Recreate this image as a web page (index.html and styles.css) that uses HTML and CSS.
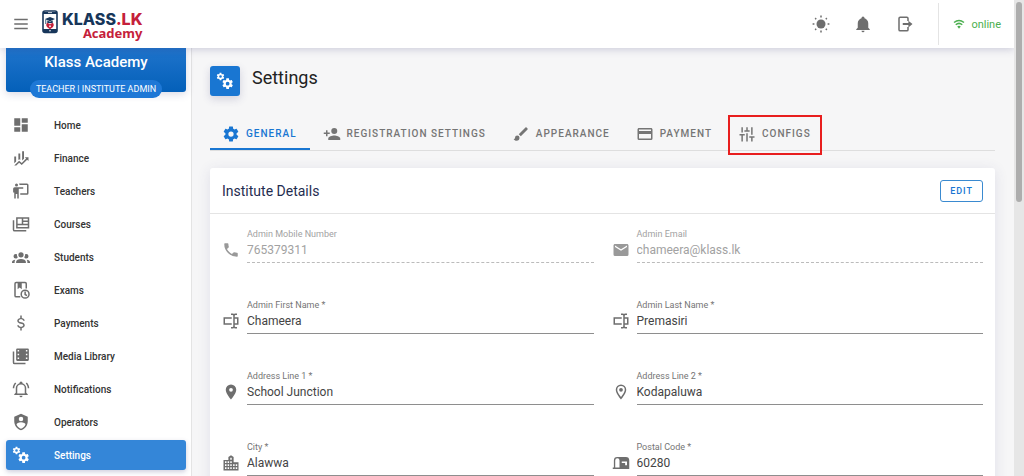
FILE: index.html
```html
<!DOCTYPE html>
<html lang="en">
<head>
<meta charset="utf-8">
<title>Settings - Klass Academy</title>
<link rel="stylesheet" href="styles.css">
</head>
<body>
<svg class="sprite" aria-hidden="true">
  <symbol id="cog" viewBox="0 0 24 24"><path d="M12,15.5A3.5,3.5 0 0,1 8.5,12A3.5,3.5 0 0,1 12,8.5A3.5,3.5 0 0,1 15.5,12A3.5,3.5 0 0,1 12,15.5M19.43,12.97C19.47,12.65 19.5,12.33 19.5,12C19.5,11.67 19.47,11.34 19.43,11L21.54,9.37C21.73,9.22 21.78,8.95 21.66,8.73L19.66,5.27C19.54,5.05 19.27,4.96 19.05,5.05L16.56,6.05C16.04,5.66 15.5,5.32 14.87,5.07L14.5,2.42C14.46,2.18 14.25,2 14,2H10C9.75,2 9.54,2.18 9.5,2.42L9.13,5.07C8.5,5.32 7.96,5.66 7.44,6.05L4.95,5.05C4.73,4.96 4.46,5.05 4.34,5.27L2.34,8.73C2.21,8.95 2.27,9.22 2.46,9.37L4.57,11C4.53,11.34 4.5,11.67 4.5,12C4.5,12.33 4.53,12.65 4.57,12.97L2.46,14.63C2.27,14.78 2.21,15.05 2.34,15.27L4.34,18.73C4.46,18.95 4.73,19.03 4.95,18.95L7.44,17.94C7.96,18.34 8.5,18.68 9.13,18.93L9.5,21.58C9.54,21.82 9.75,22 10,22H14C14.25,22 14.46,21.82 14.5,21.58L14.87,18.93C15.5,18.67 16.04,18.34 16.56,17.94L19.05,18.95C19.27,19.03 19.54,18.95 19.66,18.73L21.66,15.27C21.78,15.05 21.73,14.78 21.54,14.63L19.43,12.97Z"/></symbol>
  <symbol id="cogs" viewBox="0 0 24 24"><use href="#cog" x="0" y="0" width="12" height="12"/><use href="#cog" x="7" y="7" width="17" height="17"/></symbol>
  <symbol id="textbox" viewBox="0 0 24 24"><path d="M17,7H22V17H17V19A1,1 0 0,0 18,20H20V22H17.5C16.95,22 16,21.55 16,21C16,21.55 15.05,22 14.5,22H12V20H14A1,1 0 0,0 15,19V5A1,1 0 0,0 14,4H12V2H14.5C15.05,2 16,2.45 16,3C16,2.45 16.95,2 17.5,2H20V4H18A1,1 0 0,0 17,5V7M2,7H13V9H4V15H13V17H2V7M20,15V9H17V15H20Z"/></symbol>
</svg>
<div class="app">
  <header class="topbar">
    <button class="icon-button" type="button" aria-label="Menu"><svg class="icon" viewBox="0 0 24 24"><path d="M3,5H21V7H3ZM3,11H21V13H3ZM3,17H21V19H3Z"/></svg></button>
    <a class="logo" href="#">
      <svg class="logo-mark" viewBox="0 0 16 24"><rect x="1" y="1" width="14" height="21.5" rx="2" fill="#fff" stroke="#17365a" stroke-width="1.6"/><path d="M1 2h14v2H1zM1 19h14v3H1z" fill="#17365a"/><path d="M6 2.6h4" stroke="#fff" stroke-width=".8"/><path d="M8 7L13 9L8 11.2L3 9ZM5.3 10.5L8 11.7L10.7 10.5V13H5.3ZM3.4 9.5h.8V14h-.8z" fill="#17365a"/><path d="M5 12.8L8 14l3-1.200Q12.600 15 11 17L8 19.200L5 17Q3.400 15 5 12.800Z" fill="#c5203a"/><path d="M8 14.300l.7 2L8 17.600l-.7-1.300Z" fill="#fff"/><circle cx="8" cy="20.700" r=".8" fill="#fff"/></svg>
      <span class="logo-text"><span class="logo-name">KLASS<span class="logo-red">.LK</span></span><span class="logo-sub">Academy</span></span>
    </a>
    <div class="actions">
      <button class="icon-button" type="button" aria-label="Theme"><svg class="icon" viewBox="0 0 24 24"><circle cx="12" cy="12" r="6"/><g class="line"><path d="M12 .8V3.200M12 20.800v2.400M.8 12h2.400M20.800 12h2.400M4.200 4.200l1.400 1.400M18.400 18.400l1.400 1.400M19.800 4.200l-1.400 1.400M5.600 18.400l-1.400 1.400"/></g></svg></button>
      <button class="icon-button" type="button" aria-label="Notifications"><svg class="icon" viewBox="0 0 24 24"><path d="M21,19V20H3V19L5,17V11C5,7.9 7.03,5.17 10,4.29C10,4.19 10,4.1 10,4A2,2 0 0,1 12,2A2,2 0 0,1 14,4C14,4.1 14,4.19 14,4.29C16.97,5.17 19,7.9 19,11V17L21,19M14,21A2,2 0 0,1 12,23A2,2 0 0,1 10,21"/></svg></button>
      <button class="icon-button" type="button" aria-label="Log out"><svg class="icon" viewBox="0 0 24 24"><path class="line" d="M16 8V4.500Q16 3 14.500 3H5.500Q4 3 4 4.500V19.500Q4 21 5.500 21H14.500Q16 21 16 19.500V16"/><path d="M9 10.700H16.500V7.500L22 12L16.500 16.500V13.300H9Z"/></svg></button>
    </div>
    <div class="status"><svg class="wifi" viewBox="0 0 24 24"><path class="line" d="M2 9Q12 1 22 9M5.500 13.500Q12 8 18.500 13.500"/><path d="M8.500 17Q12 14 15.500 17L12 21.500Z"/></svg>online</div>
  </header>
  <div class="body">
    <aside class="sidebar">
      <div class="profile"><strong class="profile-name">Klass Academy</strong><span class="role">TEACHER | INSTITUTE ADMIN</span></div>
      <nav class="nav">
        <a class="nav-item" href="#"><svg class="icon" viewBox="0 0 24 24"><path d="M13,3V9H21V3M13,21H21V11H13M3,21H11V15H3M3,13H11V3H3V13Z"/></svg>Home</a>
        <a class="nav-item" href="#"><svg class="icon" viewBox="0 0 24 24"><path d="M5.500,16.500L3,18.940V10H5.500M11,14.660L9.700,13.500L8.500,14.640V6H11M16,13L13.500,15.300V3H16M18.810,12.810L17,11H22V16L20.210,14.210L13,21.360L9.530,18.340L5.750,22H3L9.470,15.660L13,18.640"/></svg>Finance</a>
        <a class="nav-item" href="#"><svg class="icon" viewBox="0 0 24 24"><path d="M20,17A2,2 0 0,0 22,15V4A2,2 0 0,0 20,2H9.46C9.81,2.61 10,3.3 10,4H20V15H11V17M15,7V9H9V22H7V16H5V22H3V14H1.5V9A2,2 0 0,1 3.5,7H15M8,4A2,2 0 0,1 6,6A2,2 0 0,1 4,4A2,2 0 0,1 6,2A2,2 0 0,1 8,4Z"/></svg>Teachers</a>
        <a class="nav-item" href="#"><svg class="icon" viewBox="0 0 24 24"><path class="line" d="M2 7V19.500Q2 21 3.500 21H19M6.500 4H22V17H6.500ZM6.500 12.500H22M14 4V12.500M14 8.200H22"/></svg>Courses</a>
        <a class="nav-item" href="#"><svg class="icon" viewBox="0 0 24 24"><path d="M12,5.5A3.5,3.5 0 0,1 15.5,9A3.5,3.5 0 0,1 12,12.5A3.5,3.5 0 0,1 8.5,9A3.5,3.5 0 0,1 12,5.5M5,8C5.56,8 6.08,8.15 6.53,8.42C6.38,9.85 6.8,11.27 7.66,12.38C7.16,13.34 6.16,14 5,14A3,3 0 0,1 2,11A3,3 0 0,1 5,8M19,8A3,3 0 0,1 22,11A3,3 0 0,1 19,14C17.84,14 16.84,13.34 16.34,12.38C17.2,11.27 17.62,9.85 17.47,8.42C17.92,8.15 18.44,8 19,8M5.5,18.25C5.5,16.18 8.41,14.5 12,14.5C15.59,14.5 18.5,16.18 18.5,18.25V20H5.5V18.25M0,20V18.5C0,17.11 1.89,15.94 4.45,15.6C3.86,16.28 3.5,17.22 3.5,18.25V20H0M24,20H20.5V18.25C20.5,17.22 20.14,16.28 19.55,15.6C22.11,15.94 24,17.11 24,18.5V20Z"/></svg>Students</a>
        <a class="nav-item" href="#"><svg class="icon" viewBox="0 0 24 24"><path class="line" d="M11 21H5.500Q4 21 4 19.500V3.500Q4 2 5.500 2H17.500Q19 2 19 3.500V10"/><path d="M7.500 2H13V11L10.200 8.500L7.500 11Z"/><circle class="line" cx="17.500" cy="17.500" r="5.200"/><path class="line" d="M17.500 14V18L20 19.500"/></svg>Exams</a>
        <a class="nav-item" href="#"><svg class="icon" viewBox="0 0 24 24"><path d="M7,15H9C9,16.08 10.37,17 12,17C13.63,17 15,16.08 15,15C15,13.9 13.96,13.5 11.76,12.97C9.64,12.44 7,11.78 7,9C7,7.21 8.47,5.69 11,5.18V2H13V5.18C15.53,5.69 17,7.21 17,9H15C15,7.92 13.63,7 12,7C10.37,7 9,7.92 9,9C9,10.1 10.04,10.5 12.24,11.03C14.36,11.56 17,12.22 17,15C17,16.79 15.53,18.31 13,18.82V22H11V18.82C8.47,18.31 7,16.79 7,15Z"/></svg>Payments</a>
        <a class="nav-item" href="#"><svg class="icon" viewBox="0 0 24 24"><path class="line" d="M2 6V20.500Q2 22 3.500 22H18"/><path fill-rule="evenodd" d="M7 2H21Q22.500 2 22.500 3.500V17Q22.500 18.500 21 18.500H7Q5.500 18.500 5.500 17V3.500Q5.500 2 7 2ZM7.500 4V6H9.500V4ZM7.500 9V11H9.500V9ZM7.500 14V16H9.500V14ZM18.500 4V6H20.500V4ZM18.500 9V11H20.500V9ZM18.500 14V16H20.500V14Z"/></svg>Media Library</a>
        <a class="nav-item" href="#"><svg class="icon" viewBox="0 0 24 24"><path d="M10,21H14A2,2 0 0,1 12,23A2,2 0 0,1 10,21M21,19V20H3V19L5,17V11C5,7.9 7.03,5.17 10,4.29C10,4.19 10,4.1 10,4A2,2 0 0,1 12,2A2,2 0 0,1 14,4C14,4.1 14,4.19 14,4.29C16.97,5.17 19,7.9 19,11V17L21,19M17,11A5,5 0 0,0 12,6A5,5 0 0,0 7,11V18H17V11M19.75,3.19L18.33,4.61C20.04,6.3 21,8.6 21,11H23C23,8.07 21.84,5.25 19.75,3.19M1,11H3C3,8.6 3.96,6.3 5.67,4.61L4.25,3.19C2.16,5.25 1,8.07 1,11Z"/></svg>Notifications</a>
        <a class="nav-item" href="#"><svg class="icon" viewBox="0 0 24 24"><path d="M12,1L3,5V11C3,16.55 6.84,21.74 12,23C17.16,21.74 21,16.55 21,11V5L12,1M12,5A3,3 0 0,1 15,8A3,3 0 0,1 12,11A3,3 0 0,1 9,8A3,3 0 0,1 12,5M17.13,17C15.92,18.85 14.11,20.24 12,20.92C9.89,20.24 8.08,18.85 6.87,17C6.53,16.5 6.24,16 6,15.47C6,13.82 8.71,12.47 12,12.47C15.29,12.47 18,13.79 18,15.47C17.76,16 17.47,16.5 17.13,17Z"/></svg>Operators</a>
        <a class="nav-item active" href="#" aria-current="page"><svg class="icon"><use href="#cogs"/></svg>Settings</a>
      </nav>
    </aside>
    <main class="main">
      <div class="page-head"><span class="page-icon"><svg class="icon"><use href="#cogs"/></svg></span><h1 class="page-title">Settings</h1></div>
      <div class="tabs" role="tablist">
        <button class="tab selected" type="button" role="tab" aria-selected="true"><svg class="icon"><use href="#cog"/></svg>GENERAL</button>
        <button class="tab" type="button" role="tab"><svg class="icon" viewBox="0 0 24 24"><path d="M15,14C12.33,14 7,15.33 7,18V20H23V18C23,15.33 17.67,14 15,14M6,10V7H4V10H1V12H4V15H6V12H9V10M15,12A4,4 0 0,0 19,8A4,4 0 0,0 15,4A4,4 0 0,0 11,8A4,4 0 0,0 15,12Z"/></svg>REGISTRATION SETTINGS</button>
        <button class="tab" type="button" role="tab"><svg class="icon" viewBox="0 0 24 24"><path d="M20.71,4.63L19.37,3.29C19,2.9 18.35,2.9 17.96,3.29L9,12.25L11.75,15L20.71,6.04C21.1,5.65 21.1,5 20.71,4.63M7,14A3,3 0 0,0 4,17C4,18.31 2.84,19 2,19C2.92,20.22 4.5,21 6,21A4,4 0 0,0 10,17A3,3 0 0,0 7,14Z"/></svg>APPEARANCE</button>
        <button class="tab" type="button" role="tab"><svg class="icon" viewBox="0 0 24 24"><path d="M20,8H4V6H20M20,18H4V12H20M20,4H4C2.89,4 2,4.89 2,6V18A2,2 0 0,0 4,20H20A2,2 0 0,0 22,18V6C22,4.89 21.1,4 20,4Z"/></svg>PAYMENT</button>
        <button class="tab highlighted" type="button" role="tab"><svg class="icon" viewBox="0 0 24 24"><path d="M4.500 3H6.500V10H4.500ZM2 12H9V14H6.500V22H4.500V14H2ZM11 3H13V7H15.500V9H8.500V7H11ZM11 11H13V22H11ZM17.500 3H19.500V13H17.500ZM15 15H22V17H19.500V22H17.500V17H15Z"/></svg>CONFIGS</button>
      </div>
      <section class="card">
        <div class="card-head"><h2 class="card-title">Institute Details</h2><button class="edit" type="button">EDIT</button></div>
        <form class="form">
          <div class="field disabled"><svg class="icon" viewBox="0 0 24 24"><path d="M6.62,10.79C8.06,13.62 10.38,15.94 13.21,17.38L15.41,15.18C15.69,14.9 16.08,14.82 16.43,14.93C17.55,15.3 18.75,15.5 20,15.5A1,1 0 0,1 21,16.5V20A1,1 0 0,1 20,21A17,17 0 0,1 3,4A1,1 0 0,1 4,3H7.5A1,1 0 0,1 8.5,4C8.5,5.25 8.7,6.45 9.07,7.57C9.18,7.92 9.1,8.31 8.82,8.59L6.62,10.79Z"/></svg><div class="control"><label for="mobile">Admin Mobile Number</label><input id="mobile" type="text" value="765379311" disabled></div></div>
          <div class="field disabled"><svg class="icon" viewBox="0 0 24 24"><path d="M20,8L12,13L4,8V6L12,11L20,6M20,4H4C2.89,4 2,4.89 2,6V18A2,2 0 0,0 4,20H20A2,2 0 0,0 22,18V6C22,4.89 21.1,4 20,4Z"/></svg><div class="control"><label for="email">Admin Email</label><input id="email" type="text" value="chameera@klass.lk" disabled></div></div>
          <div class="field"><svg class="icon"><use href="#textbox"/></svg><div class="control"><label for="first">Admin First Name *</label><input id="first" type="text" value="Chameera"></div></div>
          <div class="field"><svg class="icon"><use href="#textbox"/></svg><div class="control"><label for="last">Admin Last Name *</label><input id="last" type="text" value="Premasiri"></div></div>
          <div class="field"><svg class="icon" viewBox="0 0 24 24"><path d="M12,11.5A2.5,2.5 0 0,1 9.5,9A2.5,2.5 0 0,1 12,6.5A2.5,2.5 0 0,1 14.5,9A2.5,2.5 0 0,1 12,11.5M12,2A7,7 0 0,0 5,9C5,14.25 12,22 12,22C12,22 19,14.25 19,9A7,7 0 0,0 12,2Z"/></svg><div class="control"><label for="line1">Address Line 1 *</label><input id="line1" type="text" value="School Junction"></div></div>
          <div class="field"><svg class="icon" viewBox="0 0 24 24"><path d="M12,6.5A2.5,2.5 0 0,1 14.5,9A2.5,2.5 0 0,1 12,11.5A2.5,2.5 0 0,1 9.5,9A2.5,2.5 0 0,1 12,6.5M12,2A7,7 0 0,1 19,9C19,14.25 12,22 12,22C12,22 5,14.25 5,9A7,7 0 0,1 12,2M12,4A5,5 0 0,0 7,9C7,10 7,12 12,18.71C17,12 17,10 17,9A5,5 0 0,0 12,4Z"/></svg><div class="control"><label for="line2">Address Line 2 *</label><input id="line2" type="text" value="Kodapaluwa"></div></div>
          <div class="field"><svg class="icon" viewBox="0 0 24 24"><path fill-rule="evenodd" d="M2 8H8.500V4L12 1.500L15.500 4V11H22V22H2ZM4 9.500V12H6V9.500ZM4 13.500V16H6V13.500ZM4 17.500V20H6V17.500ZM7.500 9.500V12H9.500V9.500ZM7.500 13.500V16H9.500V13.500ZM7.500 17.500V20H9.500V17.500ZM11 5V7.500H13V5ZM11 9.500V12H13V9.500ZM11 13.500V16H13V13.500ZM11 17.500V20H13V17.500ZM14.800 13.500V16H16.800V13.500ZM14.800 17.500V20H16.800V17.500ZM18.300 13.500V16H20.300V13.500ZM18.300 17.500V20H20.300V17.500Z"/></svg><div class="control"><label for="city">City *</label><input id="city" type="text" value="Alawwa"></div></div>
          <div class="field"><svg class="icon" viewBox="0 0 24 24"><path fill-rule="evenodd" d="M7 4H18.500Q23 4 23 8.500V20H1V18H2.500V8.500Q2.500 4 7 4ZM4.300 18H10V8.500Q10 5.800 7.200 5.800Q4.300 5.800 4.300 8.500ZM13 10V12H17.500V15H20V10Z"/></svg><div class="control"><label for="postal">Postal Code *</label><input id="postal" type="text" value="60280"></div></div>
        </form>
      </section>
    </main>
  </div>
</div>
<div class="scroll-track"><div class="scroll-thumb"></div></div>
</body>
</html>
```
FILE: styles.css
```css
* { box-sizing: border-box; }
body {
  margin: 0;
  height: 100vh;
  display: flex;
  overflow: hidden;
  background: #f6f6f7;
  color: #333;
  font-family: Roboto, sans-serif;
}
button, input { font-family: inherit; }
button { border: 0; background: none; padding: 0; }
a { color: inherit; text-decoration: none; }
.sprite { position: absolute; width: 0; height: 0; }
.icon { width: 18px; height: 18px; flex: none; fill: currentColor; }
.line { fill: none; stroke: currentColor; stroke-width: 2; }

.app { flex: 1; min-width: 0; display: flex; flex-direction: column; }
.topbar {
  height: 48px;
  flex: none;
  display: flex;
  align-items: center;
  padding-left: 12px;
  background: #fff;
  box-shadow: 0 1px 8px rgba(60, 60, 120, .25);
  z-index: 1;
}
.icon-button { display: flex; color: #6e6e6e; }
.logo { display: flex; align-items: center; gap: 4px; margin-left: 12px; }
.logo-mark { width: 16px; height: 24px; margin-bottom: 4px; }
.logo-text { display: flex; flex-direction: column; align-items: flex-end; padding-top: 1px; }
.logo-name { font: 800 16px/16px Inter, sans-serif; color: #17365a; }
.logo-red { color: #c5203a; }
.logo-sub { font: 700 13px/12px "Noto Sans", sans-serif; color: #c5203a; }
.actions { display: flex; gap: 24px; margin-left: auto; padding-right: 24px; }
.status {
  display: flex;
  align-items: center;
  gap: 6px;
  height: 42px;
  padding: 0 13px 0 14px;
  border-left: 1px solid #e4e4e4;
  color: #4caf50;
  font-size: 11px;
}
.wifi { width: 12px; height: 12px; fill: currentColor; }
.wifi .line { stroke-width: 3; }

.body { flex: 1; min-height: 0; display: flex; }
.sidebar {
  width: 192px;
  flex: none;
  padding: 0 5px 0 6px;
  background: #fff;
  border-right: 1px solid #e4e4e4;
}
.profile {
  height: 44px;
  display: flex;
  flex-direction: column;
  align-items: center;
  gap: 8px;
  padding-top: 4px;
  border-radius: 0 0 3px 3px;
  background: linear-gradient(#1f74cc, #0460b9);
  box-shadow: 0 2px 8px rgba(60, 60, 120, .2);
  color: #fff;
}
.profile-name { font-size: 15px; line-height: 20px; font-weight: 500; }
.role {
  flex: none;
  padding: 0 6px;
  border-radius: 9px;
  background: #1e78d6;
  font-size: 9px;
  line-height: 18px;
}
.nav { display: flex; flex-direction: column; gap: 3px; padding-top: 18px; }
.nav-item {
  height: 30px;
  display: flex;
  align-items: center;
  gap: 24px;
  padding-left: 6px;
  border-radius: 3px;
  font-size: 10px;
  font-weight: 500;
}
.nav-item .icon { color: #6e6e6e; }
.nav-item.active {
  background: #3486d8;
  box-shadow: 0 2px 5px rgba(60, 60, 120, .25);
  color: #fff;
}
.nav-item.active .icon { color: #fff; }

.main { flex: 1; min-width: 0; padding: 18px 19px 0 18px; }
.page-head { display: flex; gap: 12px; }
.page-icon {
  width: 30px;
  height: 30px;
  display: flex;
  align-items: center;
  justify-content: center;
  border-radius: 3px;
  background: #1976d2;
  box-shadow: 0 3px 8px rgba(60, 60, 120, .2);
  color: #fff;
}
.page-title { margin: 0; font-size: 18px; line-height: 24px; font-weight: 400; color: #222; }
.tabs { display: flex; margin-top: 21px; border-bottom: 1px solid #dedede; }
.tab {
  position: relative;
  height: 33px;
  display: flex;
  align-items: center;
  gap: 6px;
  padding: 2px 13px 0 12px;
  border-bottom: 2px solid transparent;
  color: #757575;
  font-size: 10px;
  font-weight: 500;
  letter-spacing: 1px;
  white-space: nowrap;
}
.tab + .tab { padding-left: 13px; }
.tab.selected { color: #1976d2; border-bottom-color: #1976d2; }
.tab.highlighted::after {
  content: "";
  position: absolute;
  inset: -2px 2px -7px 3px;
  border: 2px solid #e81e1e;
}

.card {
  margin-top: 17px;
  border-radius: 3px;
  background: #fff;
  box-shadow: 0 2px 14px rgba(60, 60, 120, .12);
}
.card-head {
  height: 46px;
  display: flex;
  align-items: center;
  justify-content: space-between;
  padding: 0 12px;
  border-bottom: 1px solid #e4e4e4;
}
.card-title { margin: 0; font-size: 14px; font-weight: 400; color: #1f2d50; }
.edit {
  height: 22px;
  padding: 0 9px;
  border: 1px solid #3a8ad0;
  border-radius: 3px;
  color: #1976d2;
  font-size: 9px;
  font-weight: 500;
  letter-spacing: 1px;
}
.form {
  display: grid;
  grid-template-columns: 1fr 1fr;
  gap: 36px 18px;
  padding: 14px 12px;
}
.field { height: 35px; display: flex; align-items: flex-end; gap: 7px; color: #6e6e6e; }
.field .icon { margin-bottom: 4px; }
.control { flex: 1; min-width: 0; display: flex; flex-direction: column; border-bottom: 1px solid #8e8e8e; }
.control label { font-size: 9px; line-height: 12px; color: #757575; }
.control input {
  width: 100%;
  height: 22px;
  padding: 0 0 2px;
  border: 0;
  outline: 0;
  background: none;
  color: #444;
  font-size: 12px;
}
.disabled .icon { color: #999; }
.disabled .control { border-bottom-style: dashed; border-bottom-color: #bbb; }
.disabled label, .disabled input { color: #a2a2a2; }

.scroll-track { width: 10px; flex: none; padding: 2px; background: #e6e6e6; z-index: 2; }
.scroll-thumb { height: 42vh; border-radius: 3px; background: #adadad; }
```
